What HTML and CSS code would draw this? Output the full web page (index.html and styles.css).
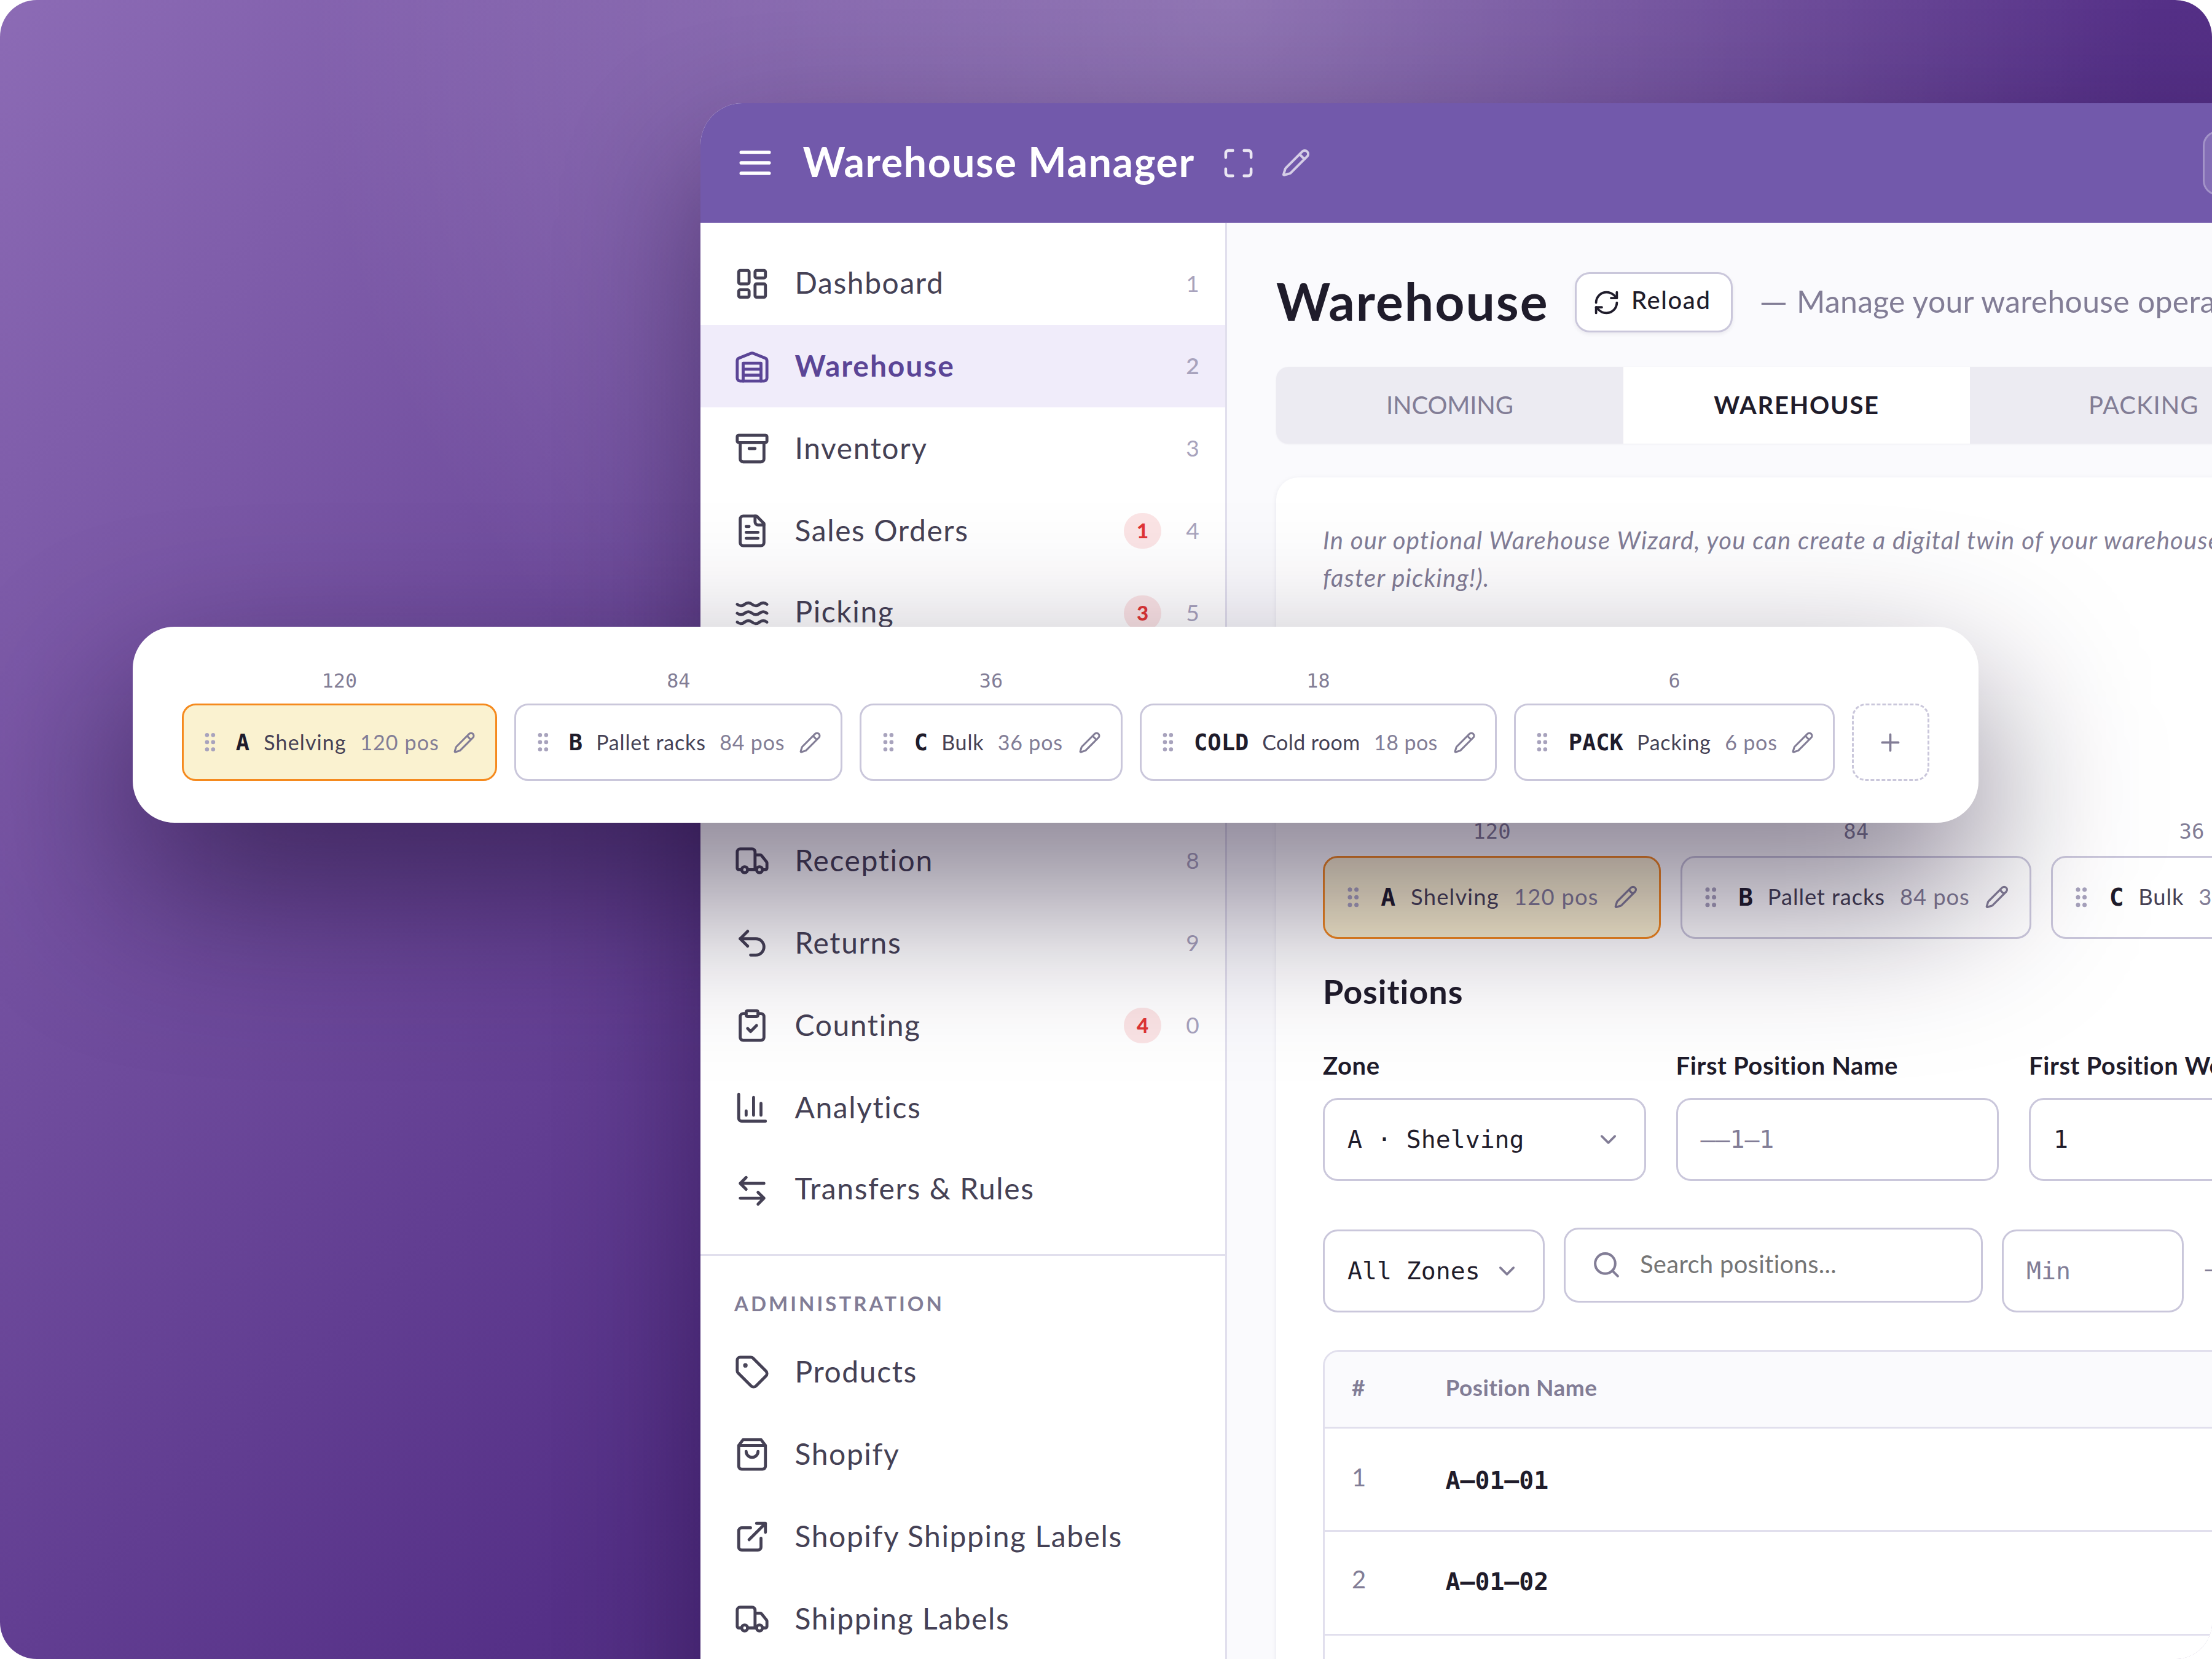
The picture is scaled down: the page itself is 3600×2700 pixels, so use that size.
FILE: index.html
```html
<!DOCTYPE html>
<html lang="en">
<head>
<meta charset="utf-8">
<title>Warehouse Manager</title>
<link rel="stylesheet" href="styles.css">
</head>
<body>
<svg class="sprite" aria-hidden="true">
  <symbol id="menu" viewBox="0 0 24 24"><path d="M4 6h16M4 12h16M4 18h16"/></symbol>
  <symbol id="maximize" viewBox="0 0 24 24"><path d="M8 3H5a2 2 0 0 0-2 2v3M21 8V5a2 2 0 0 0-2-2h-3M3 16v3a2 2 0 0 0 2 2h3M16 21h3a2 2 0 0 0 2-2v-3"/></symbol>
  <symbol id="pencil" viewBox="0 0 24 24"><path d="M21.174 6.812a1 1 0 0 0-3.986-3.987L3.842 16.174a2 2 0 0 0-.5.83l-1.321 4.352a.5.5 0 0 0 .623.622l4.353-1.32a2 2 0 0 0 .83-.497zM15 5l4 4"/></symbol>
  <symbol id="dashboard" viewBox="0 0 24 24"><rect x="3" y="3" width="7" height="9" rx="1"/><rect x="14" y="3" width="7" height="5" rx="1"/><rect x="14" y="12" width="7" height="9" rx="1"/><rect x="3" y="16" width="7" height="5" rx="1"/></symbol>
  <symbol id="warehouse" viewBox="0 0 24 24"><path d="M22 8.35V20a2 2 0 0 1-2 2H4a2 2 0 0 1-2-2V8.35A2 2 0 0 1 3.26 6.5l8-3.2a2 2 0 0 1 1.48 0l8 3.2A2 2 0 0 1 22 8.35ZM6 18h12M6 14h12"/><path d="M6 22V10h12v12"/></symbol>
  <symbol id="archive" viewBox="0 0 24 24"><rect x="2" y="3" width="20" height="5" rx="1"/><path d="M4 8v11a2 2 0 0 0 2 2h12a2 2 0 0 0 2-2V8M10 12h4"/></symbol>
  <symbol id="file" viewBox="0 0 24 24"><path d="M15 2H6a2 2 0 0 0-2 2v16a2 2 0 0 0 2 2h12a2 2 0 0 0 2-2V7Z"/><path d="M14 2v4a2 2 0 0 0 2 2h4M10 9H8M16 13H8M16 17H8"/></symbol>
  <symbol id="waves" viewBox="0 0 24 24"><path d="M2 6c.6.5 1.2 1 2.5 1C7 7 7 5 9.500 5c2.600 0 2.400 2 5 2 2.500 0 2.500-2 5-2 1.300 0 1.900.5 2.500 1M2 12c.6.5 1.200 1 2.500 1 2.500 0 2.500-2 5-2 2.600 0 2.400 2 5 2 2.500 0 2.500-2 5-2 1.300 0 1.900.5 2.500 1M2 18c.6.5 1.200 1 2.500 1 2.500 0 2.500-2 5-2 2.600 0 2.400 2 5 2 2.500 0 2.500-2 5-2 1.300 0 1.900.5 2.500 1"/></symbol>
  <symbol id="truck" viewBox="0 0 24 24"><path d="M14 18V6a2 2 0 0 0-2-2H4a2 2 0 0 0-2 2v11a1 1 0 0 0 1 1h2M15 18H9M19 18h2a1 1 0 0 0 1-1v-3.650a1 1 0 0 0-.220-.624l-3.480-4.350A1 1 0 0 0 17.520 8H14"/><circle cx="17" cy="18" r="2"/><circle cx="7" cy="18" r="2"/></symbol>
  <symbol id="undo" viewBox="0 0 24 24"><path d="M9 14 4 9l5-5"/><path d="M4 9h10.500a5.500 5.500 0 0 1 0 11H11"/></symbol>
  <symbol id="clipboard" viewBox="0 0 24 24"><rect x="8" y="2" width="8" height="4" rx="1"/><path d="M16 4h2a2 2 0 0 1 2 2v14a2 2 0 0 1-2 2H6a2 2 0 0 1-2-2V6a2 2 0 0 1 2-2h2M9 14l2 2 4-4"/></symbol>
  <symbol id="chart" viewBox="0 0 24 24"><path d="M3 3v16a2 2 0 0 0 2 2h16M18 17V9M13 17V5M8 17v-3"/></symbol>
  <symbol id="transfer" viewBox="0 0 24 24"><path d="M8 3 4 7l4 4M4 7h16M16 21l4-4-4-4M20 17H4"/></symbol>
  <symbol id="tag" viewBox="0 0 24 24"><path d="M12.586 2.586A2 2 0 0 0 11.172 2H4a2 2 0 0 0-2 2v7.172a2 2 0 0 0 .586 1.414l8.704 8.704a2.426 2.426 0 0 0 3.420 0l6.580-6.580a2.426 2.426 0 0 0 0-3.420z"/><circle cx="7.500" cy="7.500" r=".5" fill="currentColor"/></symbol>
  <symbol id="bag" viewBox="0 0 24 24"><path d="M6 2 3 6v14a2 2 0 0 0 2 2h14a2 2 0 0 0 2-2V6l-3-4ZM3 6h18M16 10a4 4 0 0 1-8 0"/></symbol>
  <symbol id="external" viewBox="0 0 24 24"><path d="M15 3h6v6M10 14 21 3M18 13v6a2 2 0 0 1-2 2H5a2 2 0 0 1-2-2V8a2 2 0 0 1 2-2h6"/></symbol>
  <symbol id="refresh" viewBox="0 0 24 24"><path d="M3 12a9 9 0 0 1 9-9 9.750 9.750 0 0 1 6.740 2.740L21 8"/><path d="M21 3v5h-5M21 12a9 9 0 0 1-9 9 9.750 9.750 0 0 1-6.740-2.740L3 16"/><path d="M8 16H3v5"/></symbol>
  <symbol id="grip" viewBox="0 0 24 24"><circle cx="9" cy="12" r="1"/><circle cx="9" cy="5" r="1"/><circle cx="9" cy="19" r="1"/><circle cx="15" cy="12" r="1"/><circle cx="15" cy="5" r="1"/><circle cx="15" cy="19" r="1"/></symbol>
  <symbol id="plus" viewBox="0 0 24 24"><path d="M5 12h14M12 5v14"/></symbol>
  <symbol id="chevron" viewBox="0 0 24 24"><path d="m6 9 6 6 6-6"/></symbol>
  <symbol id="search" viewBox="0 0 24 24"><circle cx="11" cy="11" r="8"/><path d="m21 21-4.300-4.300"/></symbol>
</svg>

<div class="stage">
  <div class="app">
    <header class="topbar">
      <svg class="icon menu"><use href="#menu"/></svg>
      <span class="brand">Warehouse Manager</span>
      <svg class="icon max"><use href="#maximize"/></svg>
      <svg class="icon edit"><use href="#pencil"/></svg>
      <button class="topbar-action" aria-label="Search"></button>
    </header>

    <div class="body">
      <aside class="sidebar">
        <nav class="nav">
          <a class="item"><svg class="icon"><use href="#dashboard"/></svg><span class="label">Dashboard</span><span class="key">1</span></a>
          <a class="item active"><svg class="icon"><use href="#warehouse"/></svg><span class="label">Warehouse</span><span class="key">2</span></a>
          <a class="item"><svg class="icon"><use href="#archive"/></svg><span class="label">Inventory</span><span class="key">3</span></a>
          <a class="item"><svg class="icon"><use href="#file"/></svg><span class="label">Sales Orders</span><span class="badge">1</span><span class="key">4</span></a>
          <a class="item raised"><svg class="icon"><use href="#waves"/></svg><span class="label">Picking</span><span class="badge">3</span><span class="key">5</span></a>
          <a class="item"></a>
          <a class="item"></a>
          <a class="item"><svg class="icon"><use href="#truck"/></svg><span class="label">Reception</span><span class="key">8</span></a>
          <a class="item"><svg class="icon"><use href="#undo"/></svg><span class="label">Returns</span><span class="key">9</span></a>
          <a class="item"><svg class="icon"><use href="#clipboard"/></svg><span class="label">Counting</span><span class="badge">4</span><span class="key">0</span></a>
          <a class="item"><svg class="icon"><use href="#chart"/></svg><span class="label">Analytics</span></a>
          <a class="item raised"><svg class="icon"><use href="#transfer"/></svg><span class="label">Transfers &amp; Rules</span></a>
        </nav>
        <div class="group">Administration</div>
        <nav>
          <a class="item"><svg class="icon"><use href="#tag"/></svg><span class="label">Products</span></a>
          <a class="item"><svg class="icon"><use href="#bag"/></svg><span class="label">Shopify</span></a>
          <a class="item"><svg class="icon"><use href="#external"/></svg><span class="label">Shopify Shipping Labels</span></a>
          <a class="item"><svg class="icon"><use href="#truck"/></svg><span class="label">Shipping Labels</span></a>
        </nav>
      </aside>

      <main class="main">
        <div class="heading">
          <h1>Warehouse</h1>
          <button class="reload"><svg class="icon"><use href="#refresh"/></svg><span>Reload</span></button>
          <span class="subtitle"><span class="em">—</span> Manage your warehouse operations</span>
        </div>
        <div class="tabs">
          <div class="tab">INCOMING</div>
          <div class="tab selected">WAREHOUSE</div>
          <div class="tab">PACKING</div>
        </div>
        <section class="card">
          <p class="intro">In our optional Warehouse Wizard, you can create a digital twin of your warehouse<br>faster picking!).</p>

          <div class="zones">
            <div class="zone w-a current"><span class="count">120</span><div class="chip"><svg class="icon grip"><use href="#grip"/></svg><b>A</b><span>Shelving</span><span class="pos">120 pos</span><svg class="icon pen"><use href="#pencil"/></svg></div></div>
            <div class="zone w-b"><span class="count">84</span><div class="chip"><svg class="icon grip"><use href="#grip"/></svg><b>B</b><span>Pallet racks</span><span class="pos">84 pos</span><svg class="icon pen"><use href="#pencil"/></svg></div></div>
            <div class="zone w-c"><span class="count">36</span><div class="chip"><svg class="icon grip"><use href="#grip"/></svg><b>C</b><span>Bulk</span><span class="pos">36 pos</span><svg class="icon pen"><use href="#pencil"/></svg></div></div>
          </div>

          <h2>Positions</h2>
          <div class="fields">
            <label class="field">Zone<span class="input">A · Shelving<svg class="icon chev"><use href="#chevron"/></svg></span></label>
            <label class="field">First Position Name<span class="input hint">––1–1</span></label>
            <label class="field">First Position Weight<span class="input">1</span></label>
          </div>

          <div class="filters">
            <span class="input all">All Zones<svg class="icon chev"><use href="#chevron"/></svg></span>
            <span class="search"><svg class="icon"><use href="#search"/></svg><span>Search positions...</span></span>
            <span class="input min hint">Min</span>
            <span class="dash">–</span>
          </div>

          <div class="table">
            <div class="row head"><span>#</span><span>Position Name</span></div>
            <div class="row"><span class="num">1</span><span class="name">A–01–01</span></div>
            <div class="row second"><span class="num">2</span><span class="name">A–01–02</span></div>
            <div class="row"></div>
          </div>
        </section>
      </main>
    </div>
  </div>

  <div class="panel">
    <div class="zones">
      <div class="zone w-a current"><span class="count">120</span><div class="chip"><svg class="icon grip"><use href="#grip"/></svg><b>A</b><span>Shelving</span><span class="pos">120 pos</span><svg class="icon pen"><use href="#pencil"/></svg></div></div>
      <div class="zone w-b"><span class="count">84</span><div class="chip"><svg class="icon grip"><use href="#grip"/></svg><b>B</b><span>Pallet racks</span><span class="pos">84 pos</span><svg class="icon pen"><use href="#pencil"/></svg></div></div>
      <div class="zone w-c"><span class="count">36</span><div class="chip"><svg class="icon grip"><use href="#grip"/></svg><b>C</b><span>Bulk</span><span class="pos">36 pos</span><svg class="icon pen"><use href="#pencil"/></svg></div></div>
      <div class="zone w-cold"><span class="count">18</span><div class="chip"><svg class="icon grip"><use href="#grip"/></svg><b>COLD</b><span>Cold room</span><span class="pos">18 pos</span><svg class="icon pen"><use href="#pencil"/></svg></div></div>
      <div class="zone w-pack"><span class="count">6</span><div class="chip"><svg class="icon grip"><use href="#grip"/></svg><b>PACK</b><span>Packing</span><span class="pos">6 pos</span><svg class="icon pen"><use href="#pencil"/></svg></div></div>
      <div class="chip add"><svg class="icon"><use href="#plus"/></svg></div>
    </div>
  </div>
</div>
</body>
</html>
```
FILE: styles.css
```css
* { box-sizing: border-box; }
:root {
  --ink: #1f1c2b;
  --text: #454155;
  --muted: #827d96;
  --faint: #a8a3bd;
  --line: #e1dfed;
  --border: #cac7db;
  --mono: "DejaVu Sans Mono", monospace;
}
body { margin: 0; background: #fff; font-family: Lato, sans-serif; color: var(--ink); }
.sprite { display: none; }
.icon {
  display: block; flex: none;
  fill: none; stroke: currentColor; stroke-width: 2; stroke-linecap: round; stroke-linejoin: round;
}

.stage {
  position: relative; width: 3600px; height: 2700px; overflow: hidden; border-radius: 60px;
  display: flow-root;
  background:
    radial-gradient(circle 1500px at 2000px 0, rgba(255,255,255,.24), rgba(255,255,255,0)),
    linear-gradient(135deg, #8c6bb5 0%, #553087 56%, #43256e 100%);
}

/* application window */
.app {
  width: 2900px; height: 2700px; margin: 168px 0 0 1140px; overflow: hidden;
  border-top-left-radius: 68px; background: #fff;
  box-shadow: 0 90px 220px rgba(20,5,40,.42);
}
.topbar {
  height: 195px; padding-left: 54.5px; display: flex; align-items: center;
  background: #7259ab; color: #fff; border-bottom: 1px solid #8f7bbd;
}
.topbar .menu { width: 68px; height: 68px; }
.brand {
  width: 638px; margin: 0 43px 0 44px; font-size: 66px; font-weight: 700; letter-spacing: .025em;
  white-space: nowrap; padding-bottom: .085em;
}
.topbar .max { width: 55px; height: 55px; opacity: .85; }
.topbar .edit { width: 48px; height: 48px; margin-left: 42px; opacity: .7; }
.topbar-action {
  width: 300px; height: 105px; margin-left: 1452px; padding: 0; border-radius: 24px;
  background: rgba(255,255,255,.12); border: 3px solid rgba(255,255,255,.26);
}
.body { display: flex; }

/* sidebar */
.sidebar { width: 857px; height: 2600px; flex: none; border-right: 3px solid var(--line); }
.nav { padding: 31.5px 0 36px; border-bottom: 3px solid var(--line); }
.item { height: 134.2px; padding: 0 42px 0 55px; display: flex; align-items: center; color: var(--text); font-size: 48px; }
.item .icon { width: 58px; height: 58px; margin-right: 40.5px; }
.label { flex: 1; letter-spacing: .033em; padding-bottom: .07em; white-space: nowrap; }
.raised .label { padding-bottom: .17em; }
.key { width: 22px; padding-bottom: 3px; font-size: 37px; color: var(--faint); text-align: center; }
.badge {
  width: 61px; height: 58px; margin-right: 40px; border-radius: 29px; background: #fbe4e5; color: #e03535;
  font-size: 33px; font-weight: 900; line-height: 56px; text-align: center;
}
.active { background: #f0ecfa; color: #5b4596; font-weight: 700; }
.active .label { letter-spacing: .04em; }
.active .key { font-weight: 600; }
.group {
  padding: 57px 0 0 55px; height: 122px; font-size: 33px; line-height: 40px; font-weight: 700;
  letter-spacing: .122em; text-transform: uppercase; color: var(--muted);
}

/* main */
.main { flex: 1; height: 2600px; background: #fafafd; padding: 80px 80px 0; }
.heading { display: flex; align-items: center; gap: 43px; height: 98px; white-space: nowrap; }
h1 { width: 443px; margin: 0; font-size: 84px; font-weight: 700; letter-spacing: .024em; padding-bottom: .06em; }
.reload {
  width: 257px; height: 98px; padding: 0 0 0 26px; display: flex; align-items: center; gap: 18px;
  font: 500 40px Lato, sans-serif; letter-spacing: .04em; color: var(--ink);
  background: #fff; border: 3px solid var(--border); border-radius: 24px; box-shadow: 0 3px 6px rgba(30,20,60,.07);
}
.reload .icon { width: 45px; height: 45px; }
.reload span { padding-bottom: .22em; }
.subtitle { font-size: 50px; letter-spacing: .005em; color: var(--muted); padding-bottom: .09em; }
.em { display: inline-block; margin-right: 5px; transform: scaleX(1.18); transform-origin: left; padding-right: 3px; }
.tabs {
  display: flex; width: 1695px; height: 125px; margin-top: 56px; border-radius: 20px; overflow: hidden;
  background: #ecebf2; box-shadow: 0 1px 3px rgba(30,20,60,.06);
}
.tab {
  width: 564.7px; flex: none; font-size: 40px; line-height: 124px; text-align: center;
  letter-spacing: .025em; color: var(--muted);
}
.tab:first-child { letter-spacing: -.004em; }
.tab.selected { background: #fff; color: var(--ink); font-weight: 700; letter-spacing: .042em; }

.card {
  width: 2000px; height: 2200px; margin-top: 55px; padding: 71.5px 76px 0; background: #fff;
  border-radius: 36px; box-shadow: 0 2px 8px rgba(30,20,60,.08);
}
.intro {
  margin: 0 0 362px; font-size: 40px; line-height: 61px; font-style: italic; letter-spacing: .031em;
  color: var(--muted); white-space: nowrap;
}

/* zone chips, sized in em so both strips share one definition */
.zones { display: flex; align-items: flex-end; gap: .83em; font-size: 36.4px; white-space: nowrap; }
.card .zones { gap: 32px; }
.zone { flex: none; display: flex; flex-direction: column; align-items: center; gap: .55em; }
.w-a { width: 15.11em; }
.w-b { width: 15.7em; }
.w-c { width: 12.56em; }
.w-cold { width: 17.1em; }
.w-pack { width: 15.34em; }
.count { font: .935em/1.18 var(--mono); color: var(--muted); }
.chip {
  width: 100%; height: 3.71em; padding: 0 .92em 0 .68em; display: flex; align-items: center; gap: .66em;
  border: 3px solid var(--border); border-radius: .66em; background: #fff; color: var(--text);
}
.current .chip { border-color: #f58a1e; background: #faf2d0; padding-right: 1.02em; }
.chip b { font-family: var(--mono); font-size: 1.09em; color: var(--ink); margin-right: -.01em; }
.chip span { letter-spacing: .024em; padding-bottom: .05em; }
.w-a .chip span { letter-spacing: .033em; }
.w-a .chip b { margin-right: .02em; }
.w-cold .chip span { letter-spacing: .012em; }
.chip .pos { color: var(--muted); }
.grip { width: 1.17em; height: 1.17em; color: var(--faint); }
.pen { width: 1.09em; height: 1.09em; margin-left: auto; color: var(--muted); }
.add { width: 3.69em; flex: none; padding: 0; justify-content: center; border-style: dashed; color: var(--muted); }
.add .icon { width: 1.32em; height: 1.32em; }

h2 { margin: 54.5px 0 64px; font-size: 54px; line-height: 64px; letter-spacing: .018em; }
.fields { display: flex; gap: 49px; }
.field {
  width: 525.5px; flex: none; display: flex; flex-direction: column; gap: 28.6px;
  font-size: 40px; line-height: 48px; font-weight: 700; letter-spacing: .015em; white-space: nowrap;
}
.input {
  height: 135px; padding: 0 37px; display: flex; align-items: center; justify-content: space-between;
  border: 3px solid var(--border); border-radius: 24px; background: #fff;
  font: 39.8px var(--mono); letter-spacing: 0; color: var(--ink);
}
.chev { width: 43px; height: 43px; color: var(--muted); }
.hint { color: var(--muted); }
.filters { display: flex; align-items: flex-start; gap: 31px; margin: 76px 0 61px; }
.all { width: 361px; margin-top: 3px; }
.min { width: 296px; margin-top: 3px; }
.search {
  width: 682px; height: 122px; padding-left: 42px; display: flex; align-items: center; gap: 30px;
  border: 3px solid var(--border); border-radius: 24px; font-size: 40px; letter-spacing: .007em; color: #757575;
}
.search .icon { width: 49px; height: 49px; color: var(--muted); }
.search span { padding-bottom: .1em; }
.dash { font-size: 40px; line-height: 135px; color: var(--muted); }

.table { border: 3px solid var(--line); border-radius: 26px; overflow: hidden; }
.row {
  height: 168.5px; padding-left: 44px; display: grid; grid-template-columns: 152.5px 1fr; align-items: center;
  border-bottom: 3px solid var(--line); font-size: 40px;
}
.row span { padding-bottom: .17em; }
.row .name { font-family: var(--mono); font-size: 39.8px; font-weight: 700; padding: 2px 0 0; }
.second .num { padding-bottom: .3em; }
.second .name { padding: 0 0 4px; }
.num { color: var(--muted); }
.head { height: 125px; background: #fafafd; color: var(--muted); font-size: 37px; font-weight: 700; letter-spacing: .013em; }

/* floating zone strip: the soft shadow is its own blurred layer */
.panel { position: absolute; left: 216px; top: 1020px; width: 3004px; height: 319px; }
.panel::before {
  content: ""; position: absolute; inset: 110px 0 -110px; border-radius: 68px;
  background: rgba(20,5,40,.56); filter: blur(135px);
}
.panel .zones {
  position: relative; height: 319px; padding: 69px 0 0 79.5px; align-items: flex-start;
  border-radius: 68px; background: #fff; font-size: 34px;
}
.panel .add { margin-top: 56px; }
```
